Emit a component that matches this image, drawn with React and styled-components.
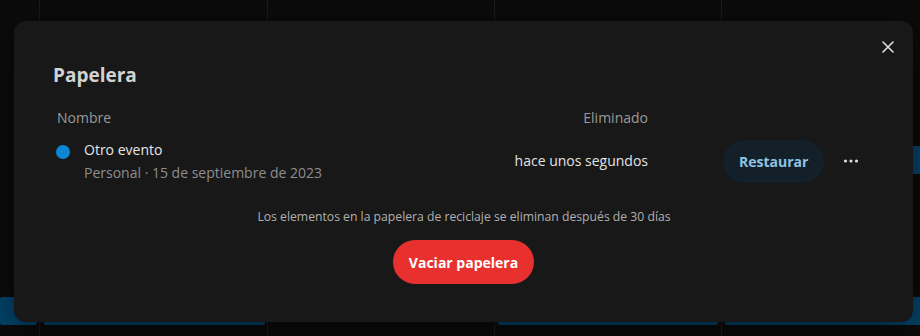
import React from "react";
import styled, { createGlobalStyle } from "styled-components";

const Global = createGlobalStyle`
  html, body { margin: 0; padding: 0; background: #0b0b0b; }
  body { font-family: "Open Sans", "Noto Sans", sans-serif; overflow: hidden; }
  * { box-sizing: border-box; }
`;

const Page = styled.div`
  position: relative;
  width: 920px;
  height: 336px;
  overflow: hidden;
  background: #0b0b0b;
`;

const Calendar = styled.div`
  display: flex;
  height: 100%;
`;

const Column = styled.div`
  position: relative;
  flex: 0 0 ${(p) => p.$w}px;
  border-right: 1px solid #1b1b1b;
`;

const Event = styled.div`
  position: absolute;
  top: ${(p) => p.$top}px;
  left: ${(p) => p.$left}px;
  right: ${(p) => p.$right}px;
  height: 28px;
  background: #03446a;
  border-radius: 2px;
`;

const Modal = styled.div`
  position: absolute;
  left: 14px;
  top: 21px;
  width: 899px;
  height: 301px;
  background: #181818;
  border-radius: 12px;
  padding: 40px 0 37px 0;
  display: flex;
  flex-direction: column;
  box-shadow: 0 8px 32px rgba(0, 0, 0, 0.5);
`;

const CloseButton = styled.button`
  position: absolute;
  top: 10px;
  right: 9px;
  width: 32px;
  height: 32px;
  border: none;
  background: transparent;
  display: flex;
  align-items: center;
  justify-content: center;
  padding: 0;
  color: #dedede;
  cursor: pointer;
`;

const Title = styled.h2`
  margin: 0;
  padding-left: 39px;
  font-size: 19px;
  line-height: 28px;
  font-weight: 700;
  color: #d2d2d2;
`;

const Table = styled.div`
  display: grid;
  grid-template-columns: 1fr 200px 143px;
  column-gap: 75px;
  padding: 0 47px 0 42px;
  margin-top: 19px;
`;

const HeadCell = styled.div`
  font-size: 14px;
  line-height: 20px;
  color: #9a9a9a;
  text-align: ${(p) => (p.$right ? "right" : "left")};
  padding-left: ${(p) => (p.$right ? 0 : 1)}px;
`;

const RowCell = styled.div`
  margin-top: 11px;
  display: flex;
  align-items: center;
  justify-content: ${(p) => p.$justify || "flex-start"};
  gap: ${(p) => p.$gap || 0}px;
  min-height: 44px;
`;

const Dot = styled.span`
  flex: 0 0 14px;
  align-self: flex-start;
  width: 14px;
  height: 14px;
  border-radius: 50%;
  background: ${(p) => p.$color};
  margin: 6px 14px 0 0;
`;

const NameBlock = styled.div`
  display: flex;
  flex-direction: column;
  gap: 3px;
`;

const Name = styled.div`
  font-size: 14px;
  line-height: 20px;
  color: #e6e6e6;
`;

const Sub = styled.div`
  font-size: 14px;
  line-height: 20px;
  color: #8e8e8e;
`;

const Time = styled.div`
  font-size: 14px;
  line-height: 20px;
  color: #e2e2e2;
  text-align: right;
  width: 100%;
`;

const PillButton = styled.button`
  height: ${(p) => p.$h}px;
  padding: 0 ${(p) => p.$px}px;
  border: none;
  border-radius: 999px;
  background: ${(p) => p.$bg};
  color: ${(p) => p.$fg};
  font-family: inherit;
  font-size: 14px;
  font-weight: 700;
  cursor: pointer;
  white-space: nowrap;
`;

const IconButton = styled.button`
  width: 32px;
  height: 32px;
  border: none;
  background: transparent;
  padding: 0;
  display: flex;
  align-items: center;
  justify-content: center;
  color: #dedede;
  cursor: pointer;
`;

const Note = styled.p`
  margin: 26px 0 0;
  text-align: center;
  font-size: 12.2px;
  line-height: 16px;
  color: #b0b0b0;
  padding-left: 1px;
`;

const Footer = styled.div`
  display: flex;
  justify-content: center;
  margin-top: 15px;
`;

const columns = [
  { w: 40, events: [{ top: 297, left: 0, right: 2 }] },
  { w: 228, events: [{ top: 297, left: 4, right: 2 }] },
  { w: 227, events: [] },
  { w: 227, events: [{ top: 297, left: 3, right: 3 }] },
  { w: 228, events: [{ top: 146, left: 3, right: 0 }, { top: 297, left: 3, right: 0 }] },
];

export default function App() {
  return (
    <Page>
      <Global />
      <Calendar>
        {columns.map((c, i) => (
          <Column key={i} $w={c.w}>
            {c.events.map((e, j) => (
              <Event key={j} $top={e.top} $left={e.left} $right={e.right} />
            ))}
          </Column>
        ))}
      </Calendar>
      <Modal role="dialog">
        <CloseButton aria-label="Cerrar">
          <svg width="12" height="12" viewBox="0 0 12 12">
            <path d="M1 1 L11 11 M11 1 L1 11" stroke="currentColor" strokeWidth="1.6" strokeLinecap="round" />
          </svg>
        </CloseButton>
        <Title>Papelera</Title>
        <Table>
          <HeadCell>Nombre</HeadCell>
          <HeadCell $right>Eliminado</HeadCell>
          <div />
          <RowCell>
            <Dot $color="#0a86d2" />
            <NameBlock>
              <Name>Otro evento</Name>
              <Sub>Personal · 15 de septiembre de 2023</Sub>
            </NameBlock>
          </RowCell>
          <RowCell>
            <Time>hace unos segundos</Time>
          </RowCell>
          <RowCell $gap={11}>
            <PillButton $h={43} $px={16} $bg="#13202a" $fg="#8fc3e2">
              Restaurar
            </PillButton>
            <IconButton aria-label="Más opciones">
              <svg width="16" height="16" viewBox="0 0 16 16">
                <circle cx="2.5" cy="8" r="1.6" fill="currentColor" />
                <circle cx="8" cy="8" r="1.6" fill="currentColor" />
                <circle cx="13.5" cy="8" r="1.6" fill="currentColor" />
              </svg>
            </IconButton>
          </RowCell>
        </Table>
        <Note>Los elementos en la papelera de reciclaje se eliminan después de 30 días</Note>
        <Footer>
          <PillButton $h={44} $px={16} $bg="#e8312f" $fg="#ffffff">
            Vaciar papelera
          </PillButton>
        </Footer>
      </Modal>
    </Page>
  );
}
